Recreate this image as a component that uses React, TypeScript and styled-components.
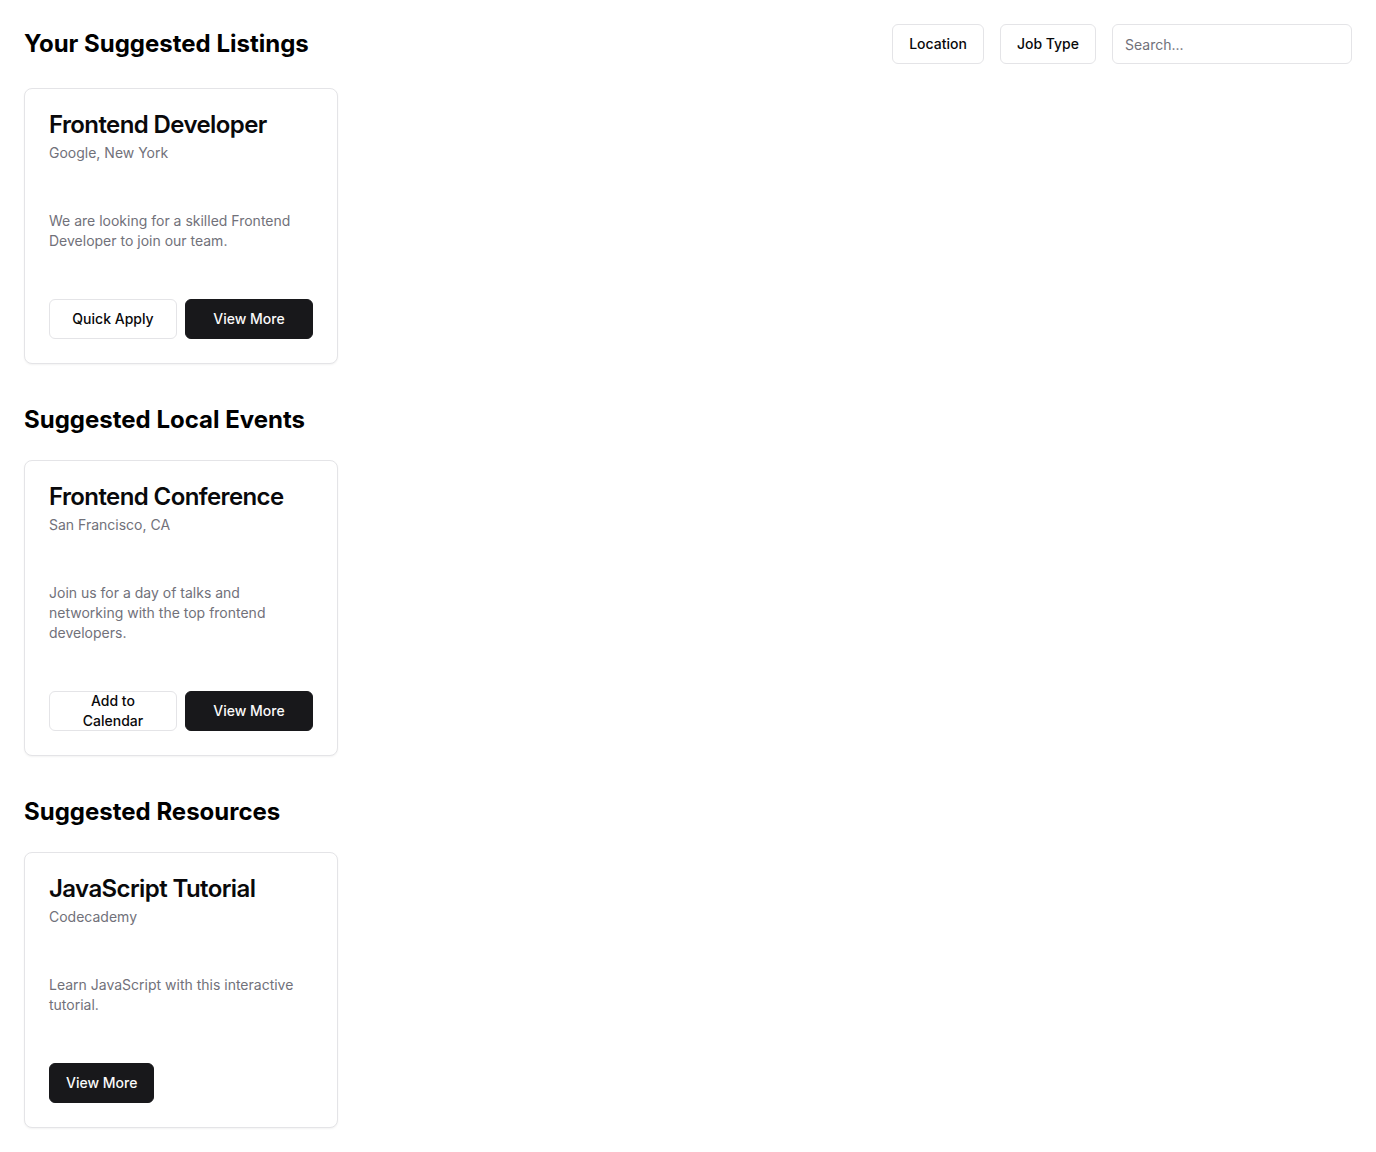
import React from "react";
import styled, { createGlobalStyle } from "styled-components";

const Global = createGlobalStyle`
  * { box-sizing: border-box; }
  body {
    margin: 0;
    background: #ffffff;
    font-family: Inter, "Noto Sans", sans-serif;
    color: #09090b;
    -webkit-font-smoothing: antialiased;
  }
`;

const Page = styled.main`
  padding: 24px;
  display: flex;
  flex-direction: column;
`;

const TopBar = styled.div`
  display: flex;
  align-items: center;
  justify-content: space-between;
  height: 40px;
  margin-bottom: 24px;
`;

const SectionTitle = styled.h2<{ $first?: boolean }>`
  margin: 0;
  font-size: 24px;
  line-height: 32px;
  font-weight: 700;
  letter-spacing: 0;
  color: #000;
  ${(p) => (p.$first ? "" : "margin-top: 40px; margin-bottom: 24px;")}
`;

const Filters = styled.div`
  display: flex;
  align-items: center;
  gap: 16px;
`;

const Button = styled.button<{ $variant?: "outline" | "dark"; $grow?: boolean }>`
  height: 40px;
  padding: 0 16px;
  border-radius: 6px;
  font-family: Inter, "Noto Sans", sans-serif;
  font-size: 14px;
  font-weight: 500;
  line-height: 20px;
  display: inline-flex;
  align-items: center;
  justify-content: center;
  text-align: center;
  cursor: pointer;
  white-space: normal;
  ${(p) => (p.$grow ? "flex: 1 1 0; min-width: 0;" : "")}
  ${(p) =>
    p.$variant === "dark"
      ? "background: #18181b; color: #fafafa; border: 1px solid #18181b;"
      : "background: #ffffff; color: #09090b; border: 1px solid #e4e4e7;"}
`;

const Search = styled.input`
  width: 240px;
  height: 40px;
  padding: 0 12px;
  border: 1px solid #e4e4e7;
  border-radius: 6px;
  font-family: Inter, "Noto Sans", sans-serif;
  font-size: 14px;
  color: #09090b;
  outline: none;
  &::placeholder { color: #71717a; }
`;

const Grid = styled.div`
  display: grid;
  grid-template-columns: repeat(4, 1fr);
  gap: 24px;
`;

const Card = styled.div`
  border: 1px solid #e4e4e7;
  border-radius: 8px;
  background: #fff;
  box-shadow: 0 1px 2px rgba(0, 0, 0, 0.05);
  display: flex;
  flex-direction: column;
`;

const CardHeader = styled.div`
  padding: 24px;
  display: flex;
  flex-direction: column;
  gap: 6px;
`;

const CardTitle = styled.h3`
  margin: 0;
  font-size: 24px;
  line-height: 24px;
  font-weight: 600;
  letter-spacing: -0.6px;
  color: #09090b;
`;

const Muted = styled.p`
  margin: 0;
  font-size: 14px;
  line-height: 20px;
  color: #71717a;
`;

const CardContent = styled.div`
  padding: 24px;
`;

const CardFooter = styled.div`
  padding: 24px;
  display: flex;
  gap: 8px;
`;

type Item = {
  title: string;
  sub: string;
  desc: string;
  secondary?: string;
};

const ItemCard = ({ item }: { item: Item }) => (
  <Card>
    <CardHeader>
      <CardTitle>{item.title}</CardTitle>
      <Muted>{item.sub}</Muted>
    </CardHeader>
    <CardContent>
      <Muted>{item.desc}</Muted>
    </CardContent>
    <CardFooter>
      {item.secondary && (
        <Button $variant="outline" $grow>
          {item.secondary}
        </Button>
      )}
      <Button $variant="dark" $grow={!!item.secondary}>
        View More
      </Button>
    </CardFooter>
  </Card>
);

export default function App() {
  return (
    <>
      <Global />
      <Page>
        <TopBar>
          <SectionTitle $first>Your Suggested Listings</SectionTitle>
          <Filters>
            <Button $variant="outline">Location</Button>
            <Button $variant="outline">Job Type</Button>
            <Search placeholder="Search..." />
          </Filters>
        </TopBar>
        <Grid>
          <ItemCard
            item={{
              title: "Frontend Developer",
              sub: "Google, New York",
              desc: "We are looking for a skilled Frontend Developer to join our team.",
              secondary: "Quick Apply",
            }}
          />
        </Grid>
        <SectionTitle>Suggested Local Events</SectionTitle>
        <Grid>
          <ItemCard
            item={{
              title: "Frontend Conference",
              sub: "San Francisco, CA",
              desc: "Join us for a day of talks and networking with the top frontend developers.",
              secondary: "Add to Calendar",
            }}
          />
        </Grid>
        <SectionTitle>Suggested Resources</SectionTitle>
        <Grid>
          <ItemCard
            item={{
              title: "JavaScript Tutorial",
              sub: "Codecademy",
              desc: "Learn JavaScript with this interactive tutorial.",
            }}
          />
        </Grid>
      </Page>
    </>
  );
}
